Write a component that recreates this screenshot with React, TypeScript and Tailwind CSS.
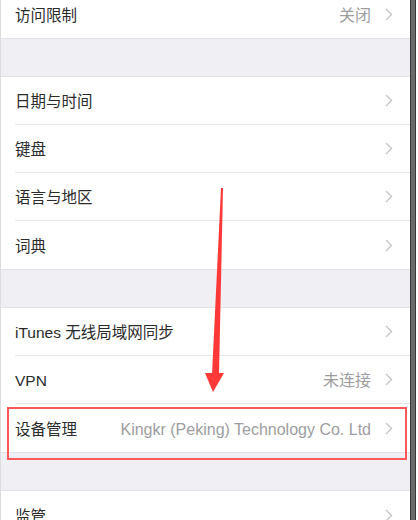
import React from 'react';

type Row = { label: string; value?: string; last?: boolean };

const font = { fontFamily: '"Liberation Sans", "Noto Sans CJK SC", sans-serif' };

const Chevron = () => (
  <svg width="8" height="13" viewBox="0 0 8 13" className="shrink-0">
    <path d="M1 1l5.5 5.5L1 12" fill="none" stroke="#c4c4c9" strokeWidth="1.4" />
  </svg>
);

const SettingsRow: React.FC<Row> = ({ label, value, last }) => (
  <div className="h-[48px] bg-white pl-[14px]">
    <div
      className={`flex h-full items-center pr-[17px] ${last ? '' : 'border-b border-[#e6e6ea]'}`}
    >
      <span className="flex-1 pt-[3px] text-[15.5px] text-[#2b2b2b]">{label}</span>
      {value && <span className="mr-[14px] pt-[3px] text-[16px] text-[#9d9d9f]">{value}</span>}
      <Chevron />
    </div>
  </div>
);

const Gap = () => <div className="h-[39px] border-y border-[#e2e2e7] bg-[#efeff4]" />;

export default function App() {
  return (
    <div className="relative flex h-[520px] w-[418px] overflow-hidden bg-white" style={font}>
      <div className="w-[410px] border-l border-[#dcdcdc]">
        <div className="-mt-[10px]">
          <SettingsRow label="访问限制" value="关闭" last />
        </div>
        <Gap />
        <SettingsRow label="日期与时间" />
        <SettingsRow label="键盘" />
        <SettingsRow label="语言与地区" />
        <SettingsRow label="词典" last />
        <Gap />
        <SettingsRow label="iTunes 无线局域网同步" />
        <SettingsRow label="VPN" value="未连接" />
        <SettingsRow label="设备管理" value="Kingkr (Peking) Technology Co. Ltd" last />
        <Gap />
        <SettingsRow label="监管" last />
      </div>
      <div className="w-[6px] border-x border-[#3a3a3a] bg-[#6a6a6a]" />
      <div className="flex-1 bg-white" />

      {/* annotation: red box */}
      <div className="absolute left-[7px] top-[407px] h-[53px] w-[400px] border-2 border-[#ff5858]" />

      {/* annotation: red arrow */}
      <svg className="absolute left-0 top-0" width="418" height="520">
        <polygon points="221,188 223,188 219,375 212,375" fill="#ff3838" />
        <polygon points="205,373 224,373 213,392" fill="#ff3838" />
      </svg>
    </div>
  );
}
